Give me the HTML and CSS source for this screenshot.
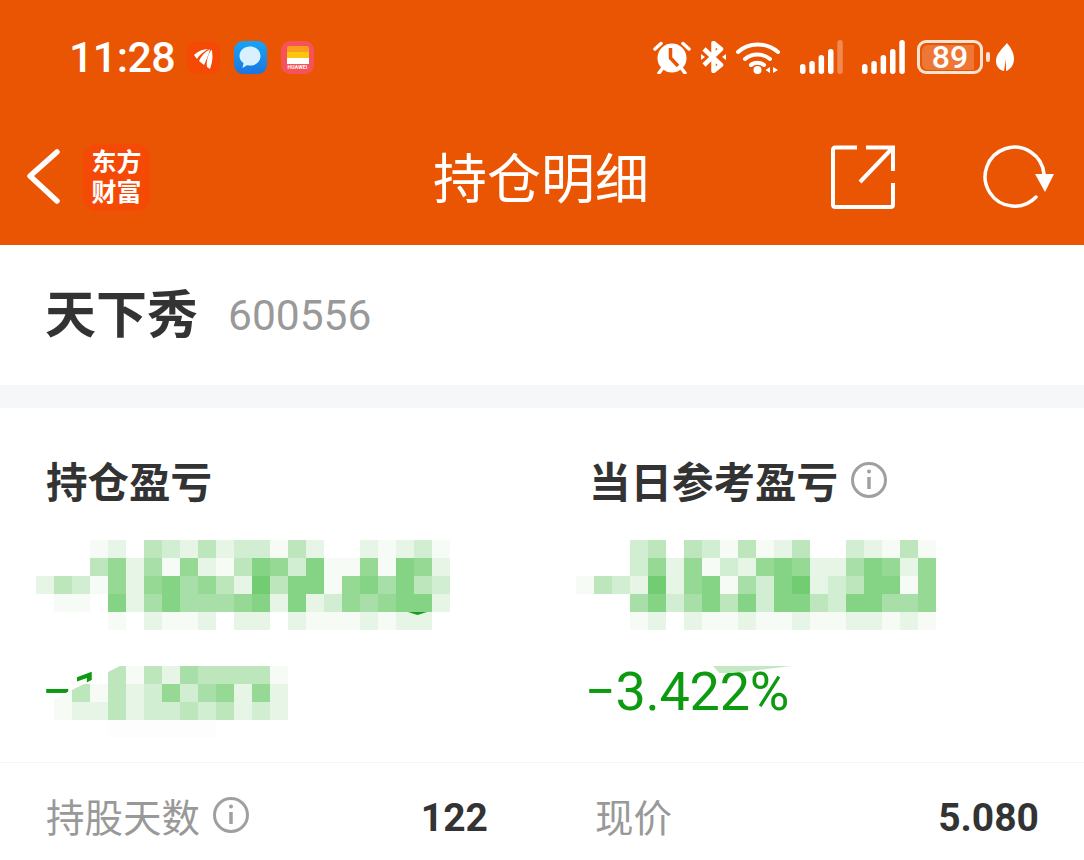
FILE: index.html
```html
<!DOCTYPE html>
<html lang="zh-CN">
<head>
  <meta charset="UTF-8" />
  <meta name="viewport" content="width=device-width, initial-scale=1.0"/>
  <title>持仓明细</title>
  <link rel="stylesheet" href="styles.css">
</head>
<body>

  <header class="top">
    <div class="status">
      <div class="status-left">
        <span class="clock">11:28</span>
        <span class="app app-fortune">
          <svg width="33" height="33" viewBox="0 0 33 33"><path d="M7 14C11 10 16 8 21 8C17 11 13 13 10 18Z M12 20C14 15 18 11 23 8C22 13 20 17 17 24Z M20 26C19 20 21 14 24.500 8.500C26 14 26 20 23 28Z" fill="#fff"/></svg>
        </span>
        <span class="app app-chat">
          <svg width="33" height="33" viewBox="0 0 33 33"><path d="M16 5.500C22 5.500 26.500 9.500 26.500 15C26.500 20.500 22 24.500 16 24.500L13 24.200L8.500 27L9.500 22C7 20.500 5.500 18 5.500 15C5.500 9.500 10 5.500 16 5.500Z" fill="#d9f1ff"/></svg>
        </span>
        <span class="app app-wallet">
          <span class="stripe stripe-a"></span>
          <span class="stripe stripe-b"></span>
          <span class="stripe stripe-c"></span>
          <span class="app-brand">HUAWEI</span>
        </span>
      </div>
      <div class="status-right">
        <svg class="icon-alarm" width="38" height="34" viewBox="0 0 38 34">
          <circle cx="19" cy="18" r="14.500" fill="#fff"/>
          <path d="M17.500 8V18L25 26" fill="none" stroke="#ea5504" stroke-width="3.500"/>
          <path d="M2 9L8 3.500M36 9L30 3.500M9 29L6 33M29 29L32 33" stroke="#fff" stroke-width="3.500" stroke-linecap="round"/>
        </svg>
        <svg class="icon-bt" width="25" height="32" viewBox="0 0 25 32">
          <path d="M3 8L20 24L12.500 30V2L20 8L3 24" fill="none" stroke="#fff" stroke-width="4.500" stroke-linejoin="round"/>
          <path d="M0 13L4 16L0 19ZM25 13L21 16L25 19Z" fill="#fff"/>
        </svg>
        <svg class="icon-wifi" width="44" height="33" viewBox="0 0 44 33">
          <path d="M2 11C13 1 30 1 42 11M9 18C16 12 27 12 34 18M15 24C18 21 25 21 28 24" fill="none" stroke="#fff" stroke-width="4" stroke-linecap="round"/>
          <circle cx="21.500" cy="29" r="4" fill="#fff"/>
          <path d="M34 26V32L29.500 29ZM37 26V32L42 29Z" fill="#fff"/>
        </svg>
        <svg class="icon-signal" width="43" height="34" viewBox="0 0 43 34">
          <rect x="0" y="24" width="5.500" height="10" rx="2.700" fill="#fff"/>
          <rect x="9.300" y="21" width="5.500" height="13" rx="2.700" fill="#fff"/>
          <rect x="18.600" y="15" width="5.500" height="19" rx="2.700" fill="#fff"/>
          <rect x="28" y="9" width="5.500" height="25" rx="2.700" fill="#fff"/>
          <rect x="37.300" y="0" width="5.500" height="34" rx="2.700" fill="#fff" opacity="0.3"/>
        </svg>
        <svg class="icon-signal" width="43" height="34" viewBox="0 0 43 34">
          <rect x="0" y="24" width="5.500" height="10" rx="2.700" fill="#fff"/>
          <rect x="9.300" y="21" width="5.500" height="13" rx="2.700" fill="#fff"/>
          <rect x="18.600" y="15" width="5.500" height="19" rx="2.700" fill="#fff"/>
          <rect x="28" y="9" width="5.500" height="25" rx="2.700" fill="#fff"/>
          <rect x="37.300" y="0" width="5.500" height="34" rx="2.700" fill="#fff"/>
        </svg>
        <div class="battery">
          <div class="battery-body"><span class="battery-fill"></span><span class="battery-num">89</span></div>
          <span class="battery-nub"></span>
        </div>
        <svg class="icon-leaf" width="18" height="28" viewBox="0 0 18 28">
          <path d="M11 0C16 6 18 11 18 16C18 22 14 27 10 28L10 16L8 28C3 27 0 23 0 18C0 11 6 6 11 0Z" fill="#fff"/>
        </svg>
      </div>
    </div>

    <nav class="nav">
      <div class="nav-left">
        <svg width="34" height="56" viewBox="0 0 34 56">
          <path d="M30 3L3 27L30 52" fill="none" stroke="#fff" stroke-width="5.500" stroke-linecap="round" stroke-linejoin="round"/>
        </svg>
        <div class="logo">东方<br>财富</div>
      </div>
      <h1 class="nav-title">持仓明细</h1>
      <div class="nav-right">
        <svg width="64" height="64" viewBox="0 0 64 64">
          <path d="M26 2.500H4.500Q2 2.500 2 5V59.500Q2 62 4.500 62H59.500Q62 62 62 59.500V38" fill="none" stroke="#fff" stroke-width="4"/>
          <path d="M35 2.500H62V26M62 2.500L29 37" fill="none" stroke="#fff" stroke-width="4"/>
        </svg>
        <svg width="74" height="64" viewBox="0 0 74 64">
          <path d="M63 29A29.500 29.500 0 1 0 55 52" fill="none" stroke="#fff" stroke-width="3.500" stroke-linecap="round"/>
          <path d="M54 29H73L64 47Z" fill="#fff"/>
        </svg>
      </div>
    </nav>
  </header>

  <section class="stock">
    <span class="stock-name">天下秀</span>
    <span class="stock-code">600556</span>
  </section>

  <div class="band"></div>

  <section class="summary">
    <div class="col">
      <h2 class="col-title">持仓盈亏</h2>
      <div class="amount amount-left">
        <div class="mosaic mosaic-23" data-rows="00012043242331420021231 00046251621476371161762 24316267564284771675743 01107257555672723656772 00001021120220211121220"></div>
        <span class="smudge smudge-amount"></span>
      </div>
      <div class="pct pct-left">
        <span class="pct-text">−1</span>
        <div class="mosaic mosaic-13 mosaic-cut" data-rows="0004142544441 1414236356262 1224233434232 0009999990000"></div>
      </div>
    </div>
    <div class="col">
      <h2 class="col-title">当日参考盈亏
        <svg class="info" width="38" height="38" viewBox="0 0 38 38"><circle cx="19" cy="19" r="16.500" fill="none" stroke="#a0a0a0" stroke-width="3"/><circle cx="19" cy="10.500" r="2" fill="#a0a0a0"/><path d="M19 16V28" stroke="#a0a0a0" stroke-width="3.500"/></svg>
      </h2>
      <div class="amount amount-right">
        <div class="mosaic mosaic-21" data-rows="000340431412400321410 000362613267622576260 143282671537823477160 000573574737743775560 000120211211211221210"></div>
      </div>
      <div class="pct pct-right">
        <span class="pct-text">−3.422%</span>
        <span class="smudge smudge-pct"></span>
      </div>
    </div>
  </section>

  <section class="details">
    <div class="detail">
      <span class="detail-label">持股天数
        <svg class="info" width="38" height="38" viewBox="0 0 38 38"><circle cx="19" cy="19" r="16.500" fill="none" stroke="#a0a0a0" stroke-width="3"/><circle cx="19" cy="10.500" r="2" fill="#a0a0a0"/><path d="M19 16V28" stroke="#a0a0a0" stroke-width="3.500"/></svg>
      </span>
      <span class="detail-value">122</span>
    </div>
    <div class="detail">
      <span class="detail-label">现价</span>
      <span class="detail-value">5.080</span>
    </div>
  </section>

  <script>
    // Build the blurred number blocks from their shade digits
    document.querySelectorAll(".mosaic").forEach(function(box) {
      box.dataset.rows.split(" ").join("").split("").forEach(function(shade) {
        const cell = document.createElement("span");
        cell.className = "s" + shade;
        box.appendChild(cell);
      });
    });
  </script>

</body>
</html>
```

FILE: styles.css
```css
* {
  margin: 0;
  padding: 0;
  box-sizing: border-box;
}

body {
  font-family: Roboto, "Noto Sans CJK SC", sans-serif;
  background: #fff;
  color: #333;
  width: 1084px;
  height: 860px;
  overflow: hidden;
}

/* orange header */
.top {
  background: #ea5504;
  height: 245px;
  color: #fff;
}

.status {
  height: 114px;
  display: flex;
  justify-content: space-between;
  align-items: center;
  padding: 0 70px 0 69px;
}

.status-left {
  display: flex;
  align-items: center;
}

.clock {
  font-size: 43px;
  line-height: 50px;
  font-weight: 500;
  width: 118px;
  letter-spacing: -0.6px;
}

.app {
  width: 33px;
  height: 33px;
  border-radius: 9px;
  margin-right: 14px;
  display: block;
  overflow: hidden;
}

.app svg {
  display: block;
}

.app-fortune {
  background: #f54a06;
}

.app-chat {
  background: linear-gradient(#17a4f5, #1b76e0);
}

.app-wallet {
  background: #f5525a;
  padding: 5px 5px 0;
  display: flex;
  flex-direction: column;
  align-items: center;
}

.stripe {
  display: block;
  width: 22px;
  height: 6px;
}

.stripe-a {
  background: #fb9d1d;
  border-radius: 2px 2px 0 0;
}

.stripe-b {
  background: #fdc50f;
}

.stripe-c {
  background: #fff;
}

.app-brand {
  font-size: 5px;
  line-height: 7px;
  font-weight: 700;
  letter-spacing: 0.2px;
}

.status-right {
  display: flex;
  align-items: center;
}

.status-right svg {
  display: block;
}

.icon-bt {
  margin-left: 10px;
}

.icon-wifi {
  margin-left: 10px;
}

.icon-signal {
  margin-left: 19px;
}

.icon-wifi + .icon-signal {
  margin-left: 20px;
}

.battery {
  display: flex;
  align-items: center;
  margin-left: 12px;
}

.battery-body {
  position: relative;
  width: 66px;
  height: 34px;
  border: 3px solid #fbe3d3;
  border-radius: 9px;
  display: flex;
  align-items: center;
  justify-content: center;
}

.battery-fill {
  position: absolute;
  left: 1.5px;
  top: 1.5px;
  bottom: 1.5px;
  width: 52px;
  background: rgba(255, 255, 255, 0.2);
  border-radius: 6px 0 0 6px;
}

.battery-num {
  position: relative;
  font-size: 32px;
  line-height: 28px;
  font-weight: 500;
}

.battery-nub {
  width: 4px;
  height: 10px;
  background: #fbe3d3;
  border-radius: 2px;
  margin-left: 3px;
}

.icon-leaf {
  margin-left: 6px;
}

.nav {
  height: 131px;
  display: grid;
  grid-template-columns: 1fr auto 1fr;
  align-items: center;
  padding: 0 29px 5px 27px;
}

.nav-left {
  display: flex;
  align-items: center;
}

.logo {
  width: 67px;
  height: 67px;
  margin-left: 22px;
  padding-top: 1px;
  background: #f54a06;
  border-radius: 14px;
  font-family: "Noto Sans CJK SC", sans-serif;
  font-size: 25px;
  line-height: 30px;
  font-weight: 700;
  text-align: center;
}

.nav-title {
  font-family: "Noto Sans CJK SC", sans-serif;
  font-size: 54px;
  line-height: 70px;
  font-weight: 400;
  padding-bottom: 2px;
}

.nav-right {
  display: flex;
  justify-content: flex-end;
  align-items: center;
  gap: 86px;
}

.nav-right svg {
  display: block;
}

/* stock name */
.stock {
  height: 140px;
  display: flex;
  align-items: center;
  padding-left: 45px;
}

.stock-name {
  font-family: "Noto Sans CJK SC", sans-serif;
  font-size: 51px;
  line-height: 60px;
  font-weight: 700;
  padding-bottom: 8px;
}

.stock-code {
  font-size: 42.500px;
  color: #999;
  margin-left: 30px;
}

.band {
  height: 23px;
  background: #f5f7f9;
}

/* profit columns */
.summary {
  display: grid;
  grid-template-columns: 543px 1fr;
  padding: 50px 0 24px 47px;
  border-bottom: 1px solid #f5f5f5;
}

.col-title {
  font-family: "Noto Sans CJK SC", sans-serif;
  font-size: 41.500px;
  line-height: 44px;
  font-weight: 700;
  display: flex;
  align-items: center;
  height: 50px;
  padding-bottom: 6px;
  margin-left: -1px;
}

.col-title .info {
  margin-left: 12px;
}

.amount {
  position: relative;
  height: 90px;
  margin-top: 32px;
}

.amount-left {
  margin-left: -11px;
}

.amount-right {
  margin-left: -14px;
}

.mosaic {
  display: grid;
  grid-auto-rows: 18px;
  background: #fff;
}

.mosaic-23 {
  grid-template-columns: repeat(23, 18px);
}

.mosaic-21 {
  grid-template-columns: repeat(21, 18px);
}

.mosaic-13 {
  grid-template-columns: repeat(13, 18px);
}

.s0 { background: #fff; }
.s1 { background: #f6fbf6; }
.s2 { background: #e6f5e6; }
.s3 { background: #d2eed2; }
.s4 { background: #bde6bd; }
.s5 { background: #a8dfa8; }
.s6 { background: #95d995; }
.s7 { background: #85d385; }
.s8 { background: #72cc72; }
.s9 { background: #fcfdfc; }

.pct {
  position: relative;
  height: 72px;
  margin-top: 36px;
}

.pct-text {
  display: block;
  font-size: 54px;
  line-height: 52px;
  letter-spacing: -0.3px;
  color: #0e9a10;
  margin-left: -5px;
}

/* cover over the hidden percentage */
.mosaic-cut {
  position: absolute;
  left: 7px;
  top: 0;
  clip-path: polygon(0 33px, 66px 0, 100% 0, 100% 100%, 0 100%);
}

.smudge {
  position: absolute;
  display: block;
}

.smudge-amount {
  left: 372px;
  top: 72px;
  width: 19px;
  height: 3px;
  background: #1a9a20;
  clip-path: polygon(0 0, 100% 0, 50% 100%);
}

.smudge-pct {
  left: 123px;
  top: 0;
  width: 79px;
  height: 7px;
  background: #c3e8c3;
  clip-path: polygon(0 0, 100% 0, 25% 100%, 8% 100%);
}

/* detail rows */
.details {
  display: grid;
  grid-template-columns: 442px 444px;
  column-gap: 107px;
  padding: 30px 0 0 46px;
}

.detail {
  display: flex;
  justify-content: space-between;
  align-items: center;
  height: 50px;
}

.detail-label {
  font-family: "Noto Sans CJK SC", sans-serif;
  font-size: 38.500px;
  line-height: 44px;
  color: #999;
  display: flex;
  align-items: center;
  padding-bottom: 6px;
}

.detail-label .info {
  margin-left: 12px;
}

.detail-value {
  font-size: 39px;
  font-weight: 700;
  color: #333;
}
```
